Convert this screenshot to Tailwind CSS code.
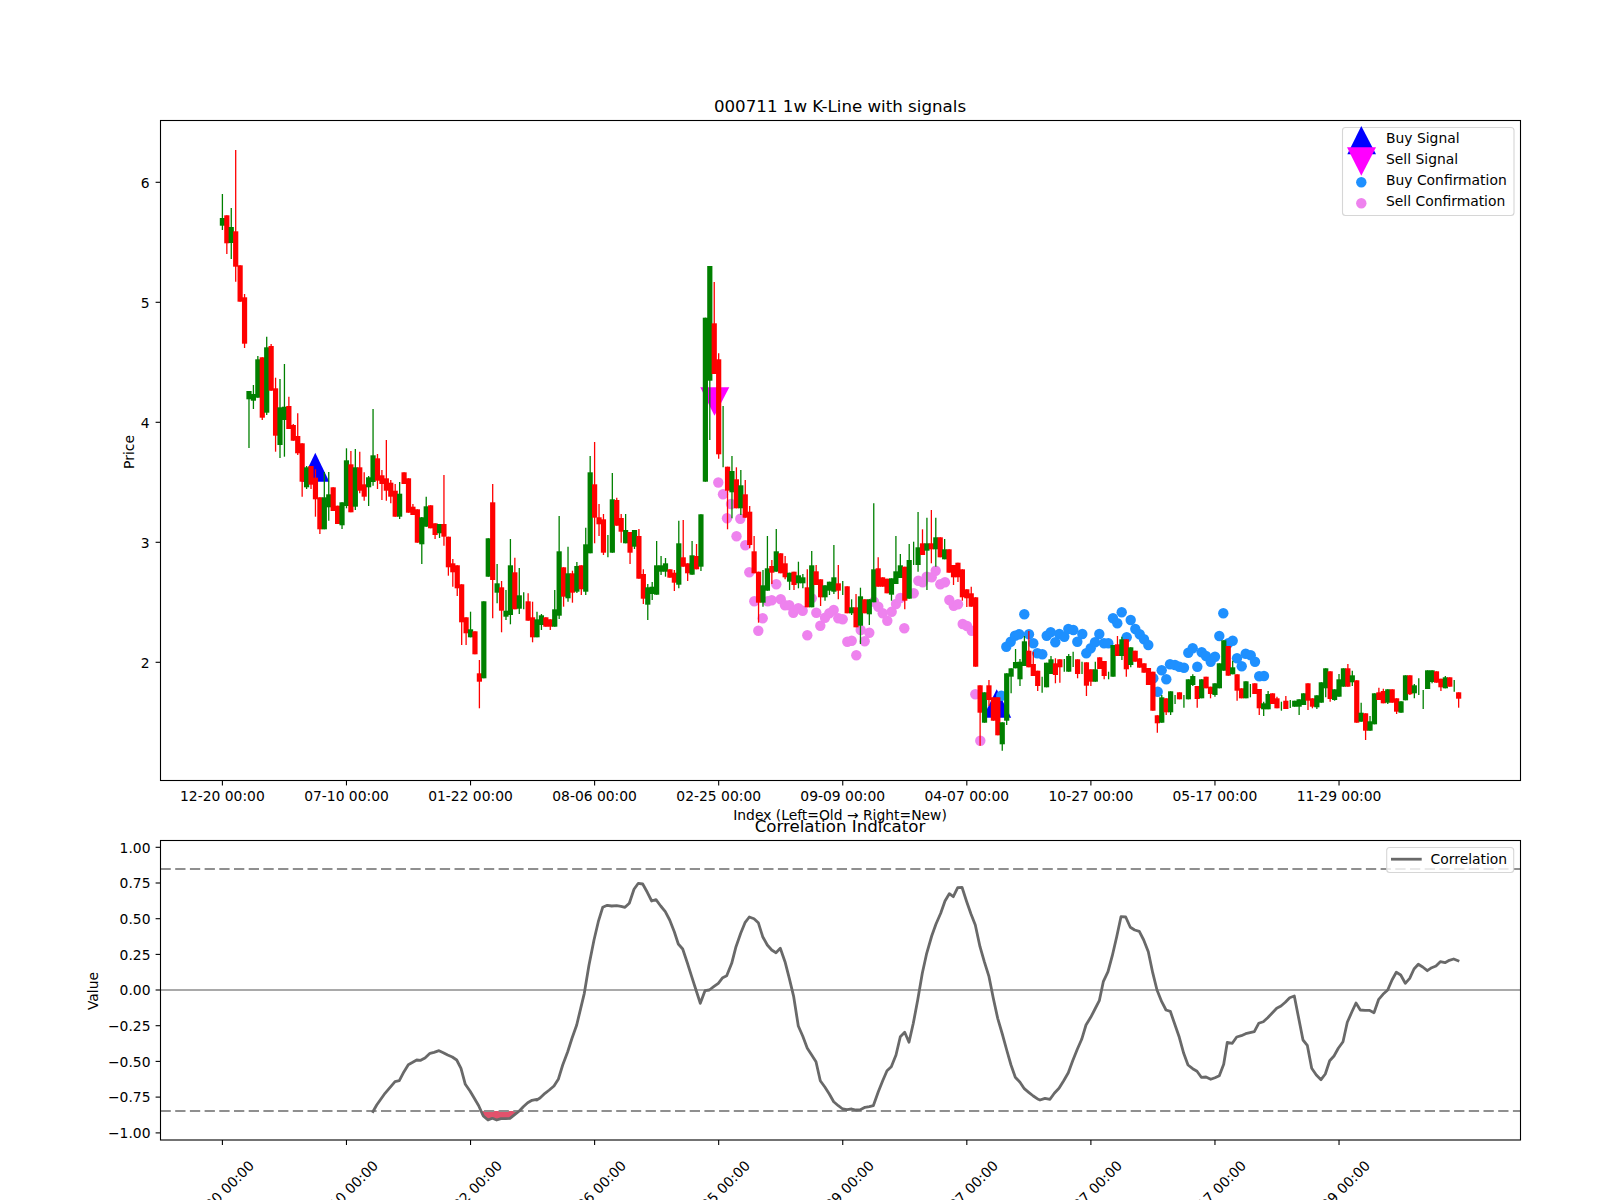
<!DOCTYPE html>
<html lang="en">
<head>
<meta charset="utf-8"/>
<meta content="width=device-width, initial-scale=1.0" name="viewport"/>
<title>000711 1w K-Line with signals</title>
<script src="https://cdn.jsdelivr.net/npm/@tailwindcss/browser@4"></script>
</head>
<body class="bg-white">
<div class="w-[1600px] h-[1200px] overflow-hidden bg-white">
<svg id="chart" class="block font-['DejaVu_Sans',sans-serif] text-[13.89px] fill-black" width="1600" height="1200" viewBox="0 0 1600 1200">
  <!-- price panel layers -->
  <g id="signals">
    <polygon points="315.3,452.7 301.3,481.7 329.3,481.7" fill="#0000ff"/>
    <polygon points="996.7,689.3 982.7,717.7 1011.2,717.7" fill="#0000ff"/>
  </g>
  <polygon points="700.3,387.3 729.3,387.3 714.5,415.7" fill="#ff00ff"/>
  <g id="sellDots" fill="#ee82ee"></g>
  <g id="buyDots" fill="#1e90ff"></g>
  <g id="candles"></g>
  <rect x="160.5" y="120.5" width="1360" height="660" fill="none" stroke="#000" stroke-width="1.1"/>

  <!-- price legend -->
  <rect x="1342.5" y="127.5" width="171.5" height="88" rx="3" fill="#fff" fill-opacity="0.8" stroke="#d6d6d6" stroke-width="1.1"/>
  <polygon points="1361.3,126 1347.3,154.3 1376,154.3" fill="#0000ff"/>
  <polygon points="1347,147.3 1376,147.3 1361.3,175.7" fill="#ff00ff"/>
  <circle cx="1361.3" cy="182.3" r="5.2" fill="#1e90ff"/>
  <circle cx="1361.3" cy="203.3" r="5.2" fill="#ee82ee"/>
  <text x="1386" y="142.7">Buy Signal</text>
  <text x="1386" y="163.7">Sell Signal</text>
  <text x="1386" y="184.7">Buy Confirmation</text>
  <text x="1386" y="205.5">Sell Confirmation</text>

  <!-- price axis -->
  <g id="priceTicks" stroke="#000" stroke-width="1.1"></g>
  <text x="840" y="112" text-anchor="middle" class="text-[16.67px]">000711 1w K-Line with signals</text>
  <text x="840" y="820" text-anchor="middle">Index (Left=Old → Right=New)</text>
  <text transform="translate(134,452) rotate(-90)" text-anchor="middle">Price</text>
  <text x="149.5" y="188" text-anchor="end">6</text>
  <text x="149.5" y="308" text-anchor="end">5</text>
  <text x="149.5" y="428" text-anchor="end">4</text>
  <text x="149.5" y="548" text-anchor="end">3</text>
  <text x="149.5" y="668" text-anchor="end">2</text>
  <g text-anchor="middle">
    <text x="222.4" y="801">12-20 00:00</text>
    <text x="346.5" y="801">07-10 00:00</text>
    <text x="470.5" y="801">01-22 00:00</text>
    <text x="594.6" y="801">08-06 00:00</text>
    <text x="718.7" y="801">02-25 00:00</text>
    <text x="842.7" y="801">09-09 00:00</text>
    <text x="966.8" y="801">04-07 00:00</text>
    <text x="1090.9" y="801">10-27 00:00</text>
    <text x="1214.9" y="801">05-17 00:00</text>
    <text x="1339" y="801">11-29 00:00</text>
  </g>

  <!-- correlation panel -->
  <polygon points="482.3,1111 483.3,1116 488,1120 492.3,1118.3 496.7,1120 501,1118.7 505.7,1118.7 510,1118.3 515,1114.3 519.3,1111" fill="#e2526c"/>
  <line x1="160.5" y1="869" x2="1520.5" y2="869" stroke="#8f8f8f" stroke-width="2.2" stroke-dasharray="10.3 4.4"/>
  <line x1="160.5" y1="1111" x2="1520.5" y2="1111" stroke="#8f8f8f" stroke-width="2.2" stroke-dasharray="10.3 4.4"/>
  <line x1="160.5" y1="990" x2="1520.5" y2="990" stroke="#a9a9a9" stroke-width="2"/>
  <polyline id="corr" fill="none" stroke="#696969" stroke-width="2.8" stroke-linejoin="round"/>
  <rect x="160.5" y="840.5" width="1360" height="299.5" fill="none" stroke="#000" stroke-width="1.1"/>

  <rect x="1386.7" y="847.5" width="127" height="25" rx="3" fill="#fff" fill-opacity="0.8" stroke="#d6d6d6" stroke-width="1.1"/>
  <line x1="1391" y1="859.2" x2="1421.7" y2="859.2" stroke="#696969" stroke-width="2.8"/>
  <text x="1430.6" y="864">Correlation</text>

  <g id="corrTicks" stroke="#000" stroke-width="1.1"></g>
  <text x="840" y="832" text-anchor="middle" class="text-[16.67px]">Correlation Indicator</text>
  <text transform="translate(98,991) rotate(-90)" text-anchor="middle">Value</text>
  <g text-anchor="end">
    <text x="150.5" y="852.7">1.00</text>
    <text x="150.5" y="888.2">0.75</text>
    <text x="150.5" y="923.9">0.50</text>
    <text x="150.5" y="959.6">0.25</text>
    <text x="150.5" y="995.2">0.00</text>
    <text x="150.5" y="1031">−0.25</text>
    <text x="150.5" y="1066.6">−0.50</text>
    <text x="150.5" y="1102.3">−0.75</text>
    <text x="150.5" y="1138">−1.00</text>
  </g>
  <g text-anchor="middle">
    <text transform="translate(221.5,1193) rotate(-45)" dy="5">12-20 00:00</text>
    <text transform="translate(345.5,1193) rotate(-45)" dy="5">07-10 00:00</text>
    <text transform="translate(469.5,1193) rotate(-45)" dy="5">01-22 00:00</text>
    <text transform="translate(593.5,1193) rotate(-45)" dy="5">08-06 00:00</text>
    <text transform="translate(717.5,1193) rotate(-45)" dy="5">02-25 00:00</text>
    <text transform="translate(841.5,1193) rotate(-45)" dy="5">09-09 00:00</text>
    <text transform="translate(965.5,1193) rotate(-45)" dy="5">04-07 00:00</text>
    <text transform="translate(1089.5,1193) rotate(-45)" dy="5">10-27 00:00</text>
    <text transform="translate(1213.5,1193) rotate(-45)" dy="5">05-17 00:00</text>
    <text transform="translate(1337.5,1193) rotate(-45)" dy="5">11-29 00:00</text>
  </g>
</svg>
</div>
<script>
// [colour, body top, body bottom, wick top, wick bottom] in page pixels, one row per week
const bars = [
['g',218,225.7,194,230],['r',215.3,243.3,215.3,254],['g',227,243,208,259],['r',231.3,266.7,150,281.7],['r',265.3,301.7],
['r',297.3,343.7,294,348],['g',391,399.3,391,448],['g',394,400.7,385,409],['g',359.3,397.7,356],['r',357.3,417.7,357.3,420],
['g',347.3,412.7,336.7,415],['r',346,390.7,344],['r',388.3,435.7,377.7,451.7],['g',407.3,445,379,458],['g',406.7,420,364,456.7],
['r',406,429,396.7],['r',425,440.7,424],['r',436,453.3,413.3,455],['r',443.3,481.7,443.3,496.7],['g',467.3,487.3,466,489],
['r',466,484.7,466,489],['r',477.7,499.3,469.3,516.7],['r',497.3,529.3,497.3,534],['g',497.3,529.3,472],['g',494.3,507.3,472,520.7],
['r',487.3,511],['r',505.7,524],['g',502.3,525.3,502.3,529],['g',460.3,506,448.3,508.3],['r',464.3,512.3,451],
['g',467.3,506.7,449,510],['r',467.3,490.7,451.7,493.3],['r',484.3,496.7,472.3,500.7],['g',477.3,487.3,476,506],['g',455.3,482,409,485.7],
['r',458.3,480.7,454,489],['r',475.3,484,470,500],['r',478.3,490.7,440,500.7],['r',482.7,496.7,480,503.3],['r',490.7,516.7,484],
['g',493.7,516.7,482,519],['r',472.3,484],['r',478.3,512.7],['r',506.7,515,504],['r',509.3,542.7],
['g',517.3,544.3,517,564],['g',506.3,526.7,496.7],['r',505.3,528.3],['r',523.3,535,523.3,539],['g',524,533.3,524,538],
['r',524,536.7,475,545.7],['r',536.7,567.3,536.7,575.7],['r',563.3,572.3,559,586.7],['r',565.3,588.3,565.3,596],['r',584.3,622.3,584.3,645],
['r',617.3,633.3,617.3,645],['g',629.3,637.3,611.7],['r',631.3,654.3],['r',673.3,681.7,660,708.3],['g',601.3,678.3],
['g',538.3,576.7],['r',502.3,580,484,618.3],['g',583.3,592.7,564,603.3],['r',587.3,610.7,581,632.3],['g',610.7,616.7,590,620],
['g',565.3,615,539,624.3],['r',572.3,609.3,557.7],['g',595.3,608.7,568,614],['g',600,601,592.3,609.3],['r',601.3,620.7,593.3],
['r',617.3,637.3,601.7,642.3],['g',619.3,637.3,611.7],['g',615.3,625,614,630],['r',617.3,626.7],['r',619.3,626.7,619.3,630],
['g',609.3,626.7,590],['g',551.3,615.7,516,619],['r',567.3,596.7,567.3,606.7],['g',573.3,598.3,546.7,601.7],['r',573.3,592.7,570.7,602.7],
['g',566,591.7,562,593],['r',565.3,589.3,565.3,595],['g',544.3,591.7,527.7,595],['g',472.3,553.3,456],['r',484.3,517.7,442,543.3],
['r',517.3,524.3,504,536],['r',519.3,552.7,514,555],['g',545,546,535,557.3],['g',499.3,552.7,473],['r',500,525.7,497.7],
['r',518,531.7,514,542.7],['g',530,543.3,514],['r',532,552.7,532,564],['g',530,546.7,530,549],['r',536,578.7,529],
['r',574,598.7,569.3,604],['g',587.3,604.7,584,620],['g',586.7,594,582,600],['g',565.3,594.7,541],['g',565.3,571.7,556,575],
['g',563.3,571.7,558,576.7],['r',569.3,577.7],['r',572.7,582.7,570,591],['g',543.3,584.7,520.7,588.3],['r',557.3,566.7,520],
['r',563.3,573.3,563.3,581],['g',555.3,574.7,541],['r',556,569.3,544],['g',514.3,566.7,514.3,571],['g',317.7,481.7],
['g',266,380.7,266,440],['r',323.3,374,282],['r',359.3,454.3,353.3,458.7],['g',460,461,406,467.3],['r',466.7,490.7,466.7,529.3],
['g',471,492.3,456,518.3],['r',479.3,508.3,467.3],['g',485.3,508.3,470,515],['r',494.3,517.7,480],['r',511.7,545,506,548.3],
['r',551.3,573.3,536],['r',571.7,602.7,571.7,622.7],['g',585.3,602.7,570,606.7],['g',568.3,590.7,536],['r',566,572.7,560,584],
['g',551.3,571.7,529],['r',553.3,573.3],['r',563.3,577.3,556,579.3],['g',572.7,581.7,572.7,590],['r',571.7,585,571.7,590],
['g',575.3,583.3,561.7,588.3],['g',577.3,583.3,574,588.3],['r',587.3,607.3,569.3],['g',565.3,607.3,551],['r',571.3,585,565],
['r',579.3,597.3,579.3,606],['g',585.3,597.3,585.3,600.7],['g',581.7,590.7,581.7,595],['g',577.3,591.7,545,594],['r',583.3,590.7,565,599.3],
['g',588,589,581,595],['r',586.3,613.3],['g',607.3,613.3,599.3,615],['r',607.3,627.3,594],['g',596.3,625.7,587.7,644],
['r',599.3,613.3],['g',599.3,614.3,599.3,625],['g',569.3,602.3,503.3],['r',568.3,586.7,557.3],['r',577.3,586.7],
['r',578.7,593.3],['g',578.3,594.7,578.3,600.7],['g',571.3,584,536],['g',565.3,578,554],['r',566.7,600.7,566.7,609.3],
['g',560,598.7,544],['g',556,557,541.7,565],['g',547.3,565,512,571.7],['r',543.3,555,529.3],['g',543.3,550.7,517.7,590],
['r',543.3,549.3,510,563.3],['g',537.3,549.3,517.7,566.7],['r',537.3,557.3],['g',549.3,559.3,539],['r',549.3,572.7],
['r',565,577.3,565,585],['r',562.7,577.3,562.7,582],['r',569.3,597.3,569.3,600.7],['r',589.3,598.3,589.3,607],['r',593.3,606.7,586.7],
['r',597.3,666.7],['r',685.3,712.7,685.3,745.7],['g',692.3,722.7],['r',685.3,700,680,706],['r',697.3,720.7],
['r',697.3,735.3],['g',722.3,744.3,722.3,750.7],['g',673.3,720.7,673.3,725],['g',668.3,676.7,668.3,693.3],['g',662,668.3,649],
['g',661.7,679.3,659,686],['g',641.3,666,636],['r',650.7,667.3,631],['r',664,676,651.7],['r',670.7,686,670.7,691],
['g',684,685,676.7,692.7],['g',662.7,687.3],['g',659.3,674,656],['r',663.3,675,658.3,683.3],['r',659.3,667.3,659.3,682.7],
['g',665,666,659,671.7],['g',656,671.7,654],['g',660,661,651.7,667],['r',659.3,674,659.3,678.3],['g',668,669,661.7,674],
['r',662.3,685.7,662.3,696],['r',669.3,681.7,669.3,686],['g',669.3,681.7,661.7],['r',657.3,669],['r',661,676,661,679.3],
['g',675,676,671.7,679.3],['g',645,676.7],['r',644.3,656,636],['g',639.3,656,636.7,660],['r',639.3,669.3,639.3,676.7],
['g',647.3,665,647.3,667.3],['r',650.7,661.7],['r',658.3,667.7],['r',663.3,672.7],['r',668,685],
['r',671.7,710.7],['r',715.3,723.3,715.3,732.7],['g',697.3,722.7,695],['r',698.3,712.3,698.3,715],['g',691.3,712.3,691.3,715],
['g',699,700,695,704],['r',692.3,699.3],['g',700,701,695,707.7],['g',679.3,699.3],['g',676,685,674.3,686],
['r',686,699,686,707.7],['g',679.3,698.3],['r',676.7,688.3],['r',686.7,694,686.7,698.3],['g',683.3,695,683.3,696.7],
['g',663.3,688.3],['g',640.3,670.7],['r',646,675.7],['g',667.3,674.3,660.7],['r',674.3,690.7,674.3,700.7],
['r',688.3,698.3],['g',681.3,698.3],['g',690,691,684,697.3],['r',683.3,694],['r',689,708.3,689,715],
['g',703.3,709.3,701.7,716],['g',694,709.3,691],['r',693.3,704],['r',698.3,708.3,696.7],['g',705,706,701.7,710.7],
['r',700.7,709,696],['g',703,704,700,708],['g',700.7,706.7],['g',699.3,706.7,699.3,715],['g',693.3,705],
['r',683.3,700.7,683.3,710],['r',698.3,706.7,698.3,708.3],['g',695.3,707.3,695.3,709],['g',682.3,702.7],['g',668.3,688.3,668.3,697.3],
['r',671.3,699,671.3,701.7],['g',689.3,700,689.3,700.7],['g',679.3,696.7,674],['g',668.3,686.7],['r',668.3,686.7,664],
['g',675.3,682.3,670.7,686],['r',680.3,722.7],['g',712.7,721.7,702.7],['r',713.3,730.7,713.3,740],['g',721.3,730.7,716],
['g',693.3,724.3],['r',692.3,700,687.7],['r',691,703.3,688.7],['g',689.3,702.7,689.3,704],['r',689.3,702.7],
['r',698.3,711.7,698.3,714],['g',701.3,712.7],['g',675.3,700.3],['r',675.3,694.3,675.3,695],['g',685.3,693.3,684,698.3],
['g',686,687,678.3,695],['g',699,700,690,709],['g',670.3,689],['g',670.3,682,670.3,683.3],['r',671.3,682.7],
['r',678.7,687.3,678.7,691],['g',677.3,688.3,676],['r',677.3,686.7],['g',685,686,680,691.7],['r',692.3,698.7,692.3,707.7]
];

const sell = [[718.3,482.5],[723,494.3],[731,504],[727,518.3],[740.3,518.7],[736.5,536.2],[745.3,545.2],[749.3,572.3],[754.3,601.3],[762.7,618.3],
[758.3,630.7],[767.7,601.3],[771.7,600.3],[776.3,584.3],[780.7,599.3],[785,605.3],[789.3,605.3],[793.3,612.7],[798.3,608.3],[802.7,610.7],
[807.3,635.3],[811.7,598.3],[816.3,612.7],[820.3,625.7],[825,617.7],[829.3,613.3],[833.7,610],[838.3,618.3],[842.7,619.3],[847.3,641.7],
[851.7,640.7],[856.3,655.3],[860.7,630],[864.7,641.3],[869.3,632.7],[874,601.7],[878.3,606.7],[882.7,613.3],[887.3,620.7],[891.7,611.7],
[896,604],[900.3,598],[904.3,628.3],[913.7,593.3],[918.3,580.7],[922.7,582.3],[926.7,576.7],[931.7,577.3],[935.7,570.7],[940.3,584.3],
[945,582.3],[949.3,600],[953.7,605.7],[958,604.3],[962.7,624],[967,626],[971.7,630.7],[975.3,694.3],[980.3,740.7]];

const buy = [[1001.3,695.7],[1006.3,646.7],[1010.7,641.7],[1015,635.7],[1019.3,634.3],[1024.3,614.3],[1029,634.3],[1033.3,643.3],[1037.3,653.3],[1042.3,654.3],
[1046.7,635.7],[1050.7,632.3],[1055.3,642.3],[1059.3,634],[1064.3,636.7],[1068.3,629],[1073.3,630],[1077.3,641.7],[1082.3,634],[1086.3,653.3],
[1090.7,648.3],[1095,642.3],[1099.3,634],[1104,643.3],[1108.3,643.3],[1113,618.3],[1117.3,623.3],[1121.7,612.3],[1126.7,637.3],[1130.7,620],
[1135.3,629],[1139.7,634.3],[1144,639.3],[1148.3,645],[1153.3,678.3],[1157.7,691.7],[1161.7,670.3],[1166.3,679.3],[1170,664.3],[1175,665],
[1179.3,666.7],[1184,667.7],[1188.3,652.7],[1192.7,648.3],[1197.3,666.7],[1201.7,652.3],[1206,656],[1210.7,661.7],[1215,656.7],[1219.3,636],
[1223.3,613.3],[1228.3,643.3],[1232.7,640.7],[1237,658.3],[1241.7,666.3],[1245.7,653.7],[1250.7,655.3],[1255,661.7],[1259.2,676.3],[1264,676]];

// correlation line, read off in three stretches: [left edge of stretch, x*3, y*3 from 770]
const corr = [
[60,[937,1028,950,1005,975,970,1005,935,1018,932,1032,905,1045,884,1058,877,1070,870,1082,871,1095,864,1110,850,1122,847,1137,842,1150,848,1163,855,1177,861,1190,870,1203,895,1216,943,1230,963,1243,985,1256,1007,1270,1038,1284,1050,1297,1045,1310,1050,1323,1046,1337,1046,1350,1045,1365,1033,1378,1023,1390,1010,1403,998,1416,991,1430,988]],
[540,[-10,990,0,984,15,970,28,960,42,948,55,928,68,885,83,845,96,805,110,765,122,715,133,670,147,585,162,510,175,455,188,412,202,406,215,408,230,407,243,409,255,412,268,400,282,358,295,340,308,342,322,367,335,393,348,389,362,408,376,425,389,450,403,485,415,522,428,537,442,578,455,620,468,660,481,700,495,662,508,660,521,650,535,640,548,623,560,617,575,580,588,530,602,490,615,458,628,441,642,446,655,458,668,500,682,525,695,540,708,548,721,535,735,575,748,625,761,680,775,768,788,798,802,835,815,855,828,875,841,932,855,952,868,972,881,995,895,1007,908,1017,921,1019,935,1017,948,1020,961,1019,975,1012,988,1010,1000,1007,1015,965,1028,932,1041,902,1054,890,1068,855,1081,800,1094,787,1107,817,1120,760,1133,690,1147,610,1160,550,1175,498,1188,462,1202,430,1215,393,1228,371,1240,380,1253,353,1266,352,1280,395,1293,432,1306,465,1320,530,1333,575,1347,620,1360,685,1373,745,1387,792,1400,840,1413,885,1426,922,1440,937,1453,956,1466,967,1480,978]],
[1040,[-5,988,0,990,15,985,30,988,43,970,57,955,71,932,85,908,98,872,112,838,125,808,138,765,152,742,165,717,178,692,190,635,204,605,217,557,230,500,243,440,257,441,271,472,284,480,298,484,311,510,325,545,338,608,351,660,365,695,378,720,391,724,404,762,418,802,431,850,444,885,458,896,471,904,484,922,498,921,512,928,525,923,538,917,551,883,562,817,577,820,590,801,604,797,617,791,630,788,643,785,656,760,670,755,683,743,696,730,710,715,723,708,736,697,749,683,763,678,776,745,789,810,802,826,815,895,829,915,843,929,856,912,869,872,882,858,895,835,909,815,922,757,935,727,948,699,961,720,975,721,988,721,1002,728,1016,688,1029,673,1043,660,1056,630,1069,607,1082,615,1096,640,1109,625,1122,597,1135,583,1148,591,1162,602,1175,593,1188,588,1201,575,1215,578,1228,571,1241,567,1258,574]]
];

const NS = 'http://www.w3.org/2000/svg';
function add(parent, tag, attrs) {
  const el = document.createElementNS(NS, tag);
  for (const k in attrs) el.setAttribute(k, attrs[k]);
  document.getElementById(parent).appendChild(el);
}

bars.forEach((b, i) => {
  const x = 222.4 + 4.431 * i;
  const colour = b[0] === 'r' ? '#ff0000' : '#008000';
  const wickTop = b[3] === undefined ? b[1] : b[3];
  const wickBottom = b[4] === undefined ? b[2] : b[4];
  add('candles', 'line', {x1: x, x2: x, y1: wickTop, y2: wickBottom, stroke: colour, 'stroke-width': 1.3});
  if (b[2] - b[1] > 1) add('candles', 'rect', {x: x - 2.6, y: b[1], width: 5.2, height: b[2] - b[1], fill: colour});
});

sell.forEach(p => add('sellDots', 'circle', {cx: p[0], cy: p[1], r: 5.2}));
buy.forEach(p => add('buyDots', 'circle', {cx: p[0], cy: p[1], r: 5.2}));

const pts = [];
corr.forEach(([x0, vals]) => {
  for (let j = 0; j < vals.length; j += 2) pts.push((x0 + vals[j] / 3).toFixed(1) + ',' + (770 + vals[j + 1] / 3).toFixed(1));
});
document.getElementById('corr').setAttribute('points', pts.join(' '));

for (let k = 0; k < 10; k++) {
  const x = 222.4 + 124.07 * k;
  add('priceTicks', 'line', {x1: x, x2: x, y1: 780.5, y2: 785.4});
  add('corrTicks', 'line', {x1: x, x2: x, y1: 1140, y2: 1145});
}
[182.3, 302.3, 422.3, 542.3, 662.3].forEach(y => add('priceTicks', 'line', {x1: 155.6, x2: 160.5, y1: y, y2: y}));
[847.3, 883, 918.7, 954.4, 990, 1025.7, 1061.4, 1097.1, 1132.9].forEach(y => add('corrTicks', 'line', {x1: 155.6, x2: 160.5, y1: y, y2: y}));
</script>
</body>
</html>
